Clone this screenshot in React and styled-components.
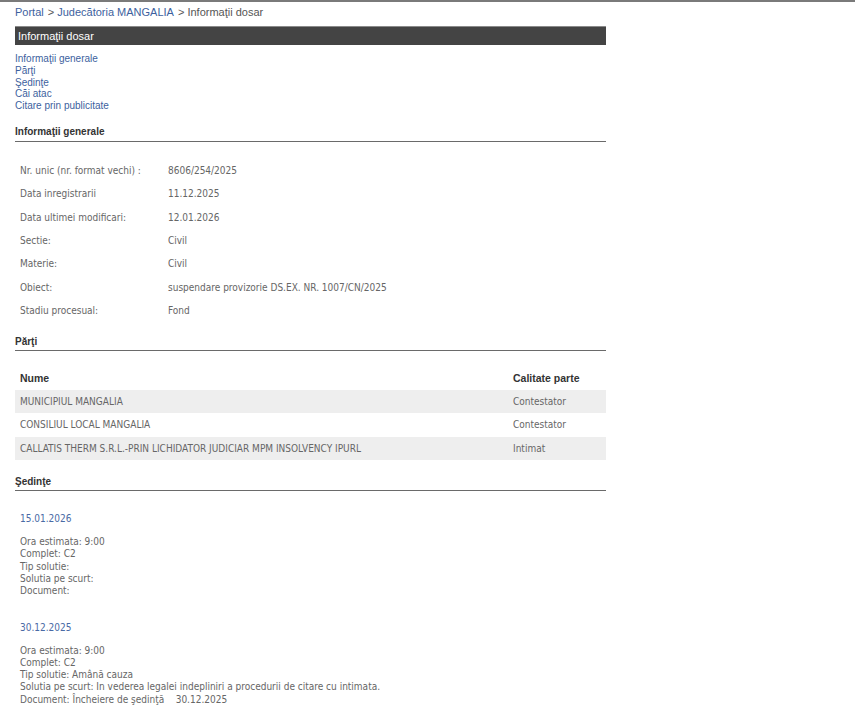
import React from 'react';
import styled, {createGlobalStyle} from 'styled-components';

const GlobalStyle = createGlobalStyle`
  html, body {
    margin: 0;
    padding: 0;
    background: #fff;
  }
  body {
    border-top: 2px solid #7a7a7a;
    font-family: "Liberation Sans", Arial, sans-serif;
  }
`;

const Page = styled.div`
  width: 591px;
  padding-left: 15px;
`;

const Breadcrumb = styled.div`
  height: 19px;
  padding-top: 1px;
  line-height: 19px;
  font-size: 11px;
  color: #555;
`;

const Link = styled.a`
  color: #3d5f9e;
  text-decoration: none;
  cursor: pointer;
`;

const Sep = styled.span`
  margin: 0 3px 0 4px;
`;

const TitleBar = styled.div`
  margin-top: 4px;
  height: 19px;
  line-height: 19px;
  background: #444;
  border-top: 1px solid #8a8a8a;
  box-sizing: border-box;
  color: #fff;
  font-size: 11px;
  padding-left: 3px;
`;

const Nav = styled.nav`
  margin-top: 8px;
  display: flex;
  flex-direction: column;
  font-size: 10px;
  line-height: 11.75px;
`;

const SectionTitle = styled.h3`
  margin: ${(p) => p.$top}px 0 0;
  font-size: 10px;
  font-weight: bold;
  line-height: 12px;
  color: #333;
  padding-bottom: ${(p) => p.$gap ?? 3}px;
  border-bottom: 1px solid #6a6a6a;
`;

const Table = styled.table`
  width: 591px;
  margin-top: ${(p) => p.$top}px;
  border-collapse: collapse;
  font-family: "DejaVu Sans Condensed", "DejaVu Sans", sans-serif;
  font-size: 10px;
  color: #666;
  table-layout: fixed;
`;

const Row = styled.tr`
  height: ${(p) => p.$h}px;
  background: ${(p) => (p.$striped ? '#eeeeee' : 'transparent')};
`;

const Cell = styled.td`
  padding: 0 0 0 5px;
  vertical-align: middle;
  white-space: nowrap;
  width: ${(p) => (p.$w ? `${p.$w}px` : 'auto')};
`;

const HeadCell = styled.th`
  padding: 0 0 0 5px;
  text-align: left;
  font-family: "Liberation Sans", Arial, sans-serif;
  font-size: 10.5px;
  font-weight: bold;
  color: #333;
  width: ${(p) => (p.$w ? `${p.$w}px` : 'auto')};
`;

const Hearing = styled.div`
  margin-top: ${(p) => p.$top}px;
  padding-left: 5px;
  font-family: "DejaVu Sans Condensed", "DejaVu Sans", sans-serif;
  font-size: 10px;
  color: #666;
`;

const HearingDate = styled.div`
  line-height: 12px;
  color: #4a6aa5;
`;

const HearingLines = styled.div`
  margin-top: 11px;
  line-height: 12.3px;
`;

const info = [
  ['Nr. unic (nr. format vechi) :', '8606/254/2025'],
  ['Data inregistrarii', '11.12.2025'],
  ['Data ultimei modificari:', '12.01.2026'],
  ['Sectie:', 'Civil'],
  ['Materie:', 'Civil'],
  ['Obiect:', 'suspendare provizorie DS.EX. NR. 1007/CN/2025'],
  ['Stadiu procesual:', 'Fond'],
];

const parties = [
  ['MUNICIPIUL MANGALIA', 'Contestator'],
  ['CONSILIUL LOCAL MANGALIA', 'Contestator'],
  ['CALLATIS THERM S.R.L.-PRIN LICHIDATOR JUDICIAR MPM INSOLVENCY IPURL', 'Intimat'],
];

const hearings = [
  {
    date: '15.01.2026',
    top: 22,
    lines: ['Ora estimata: 9:00', 'Complet: C2', 'Tip solutie:', 'Solutia pe scurt:', 'Document:'],
  },
  {
    date: '30.12.2025',
    top: 24,
    lines: [
      'Ora estimata: 9:00',
      'Complet: C2',
      'Tip solutie: Amână cauza',
      'Solutia pe scurt: In vederea legalei indepliniri a procedurii de citare cu intimata.',
      'Document: Încheiere de şedinţă\u00a0\u00a0\u00a0\u00a030.12.2025',
    ],
  },
];

const App = () => {
  return (
    <Page>
      <GlobalStyle />
      <Breadcrumb>
        <Link>Portal</Link>
        <Sep>&gt;</Sep>
        <Link>Judecătoria MANGALIA</Link>
        <Sep>&gt;</Sep>
        Informaţii dosar
      </Breadcrumb>
      <TitleBar>Informaţii dosar</TitleBar>
      <Nav>
        <Link>Informaţii generale</Link>
        <Link>Părţi</Link>
        <Link>Şedinţe</Link>
        <Link>Căi atac</Link>
        <Link>Citare prin publicitate</Link>
      </Nav>

      <SectionTitle $top={14}>Informaţii generale</SectionTitle>
      <Table $top={17}>
        <tbody>
          {info.map(([label, value]) => (
            <Row key={label} $h={23.33}>
              <Cell $w={143}>{label}</Cell>
              <Cell>{value}</Cell>
            </Row>
          ))}
        </tbody>
      </Table>

      <SectionTitle $top={14} $gap={2}>Părţi</SectionTitle>
      <Table $top={15}>
        <thead>
          <Row $h={23.5}>
            <HeadCell $w={488}>Nume</HeadCell>
            <HeadCell>Calitate parte</HeadCell>
          </Row>
        </thead>
        <tbody>
          {parties.map(([name, role], i) => (
            <Row key={name} $h={23.5} $striped={i % 2 === 0}>
              <Cell>{name}</Cell>
              <Cell>{role}</Cell>
            </Row>
          ))}
        </tbody>
      </Table>

      <SectionTitle $top={16} $gap={2}>Şedinţe</SectionTitle>
      {hearings.map((h) => (
        <Hearing key={h.date} $top={h.top}>
          <HearingDate>{h.date}</HearingDate>
          <HearingLines>
            {h.lines.map((l) => (
              <div key={l}>{l}</div>
            ))}
          </HearingLines>
        </Hearing>
      ))}
    </Page>
  );
};

export default App;
